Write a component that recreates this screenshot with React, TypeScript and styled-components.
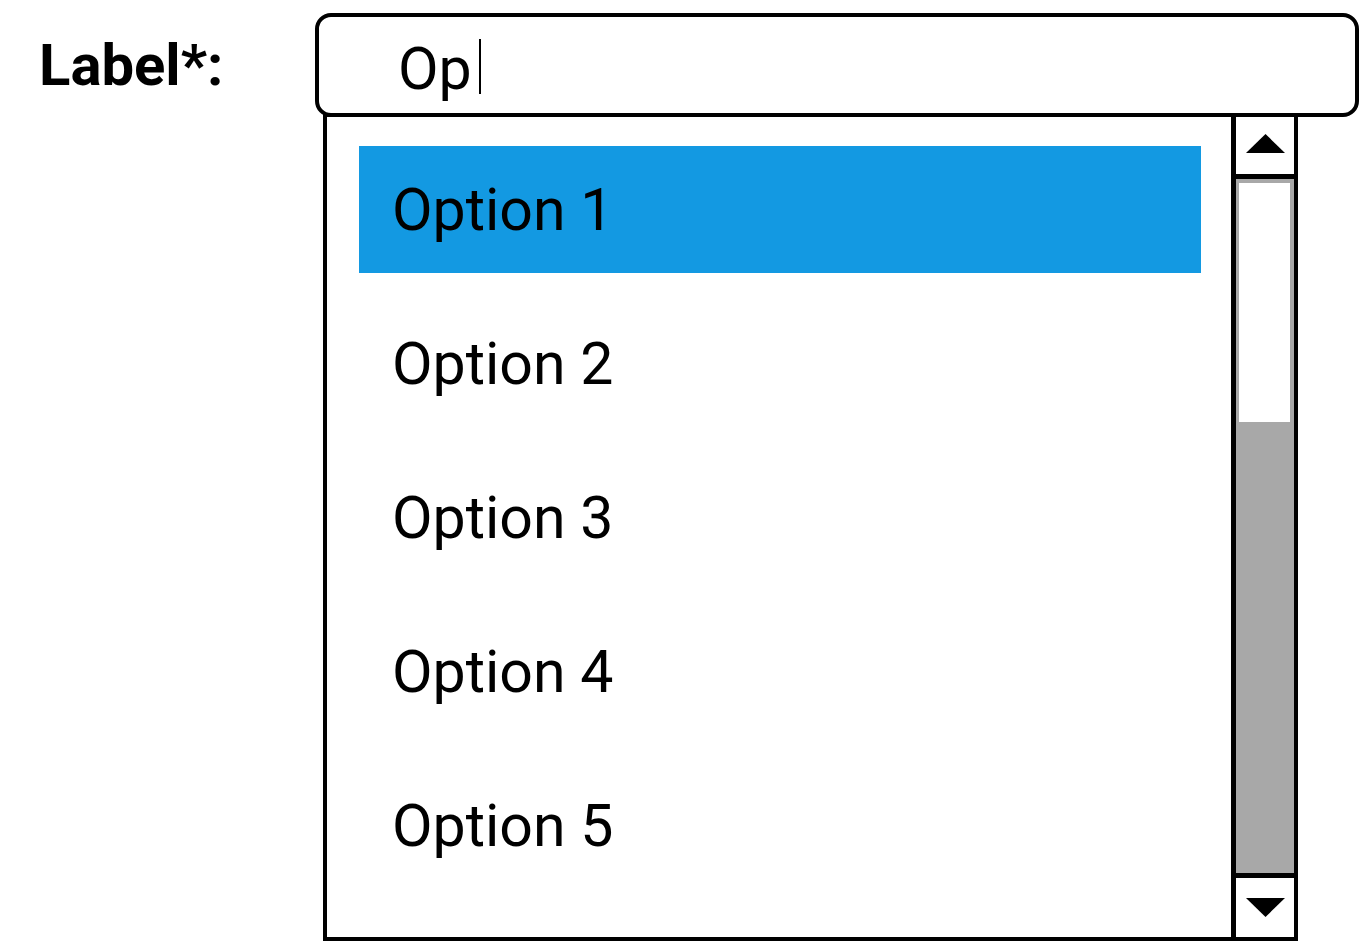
import React from "react";
import styled, { createGlobalStyle } from "styled-components";

const GlobalStyle = createGlobalStyle`
  html, body {
    margin: 0;
    padding: 0;
    background: #ffffff;
    overflow: hidden;
  }
  body {
    font-family: Roboto, "Liberation Sans", Arial, sans-serif;
    color: #000;
  }
  *, *::before, *::after {
    box-sizing: border-box;
  }
`;

const Page = styled.div`
  display: flex;
  align-items: flex-start;
  padding: 13px 0 0 39px;
  width: 1361px;
  height: 942px;
`;

const Label = styled.label`
  width: 276px;
  height: 104px;
  display: flex;
  align-items: center;
  font-size: 58px;
  line-height: 1;
  font-weight: 700;
`;

const Field = styled.div`
  width: 1044px;
  display: flex;
  flex-direction: column;
`;

const InputBox = styled.div`
  position: relative;
  z-index: 1;
  height: 104px;
  border: 4px solid #000;
  border-radius: 16px;
  background: #fff;
  display: flex;
  align-items: center;
  padding: 6px 0 0 79px;
  font-size: 59px;
  line-height: 1;
`;

const Caret = styled.span`
  display: inline-block;
  width: 2px;
  height: 55px;
  background: #000;
  margin-left: 7px;
  margin-top: -4px;
`;

const Listbox = styled.div`
  width: 975px;
  height: 828px;
  margin: -4px 0 0 8px;
  border: 4px solid #000;
  display: flex;
  background: #fff;
`;

const Options = styled.ul`
  flex: 1;
  list-style: none;
  margin: 0;
  padding: 29px 30px 0 32px;
  display: flex;
  flex-direction: column;
  gap: 27px;
  overflow: hidden;
`;

const Option = styled.li<{ $active?: boolean }>`
  flex: none;
  height: 127px;
  display: flex;
  align-items: center;
  padding-left: 33px;
  font-size: 59px;
  line-height: 1;
  background: ${(p) => (p.$active ? "#1399e2" : "transparent")};
`;

const Scrollbar = styled.div`
  width: 63px;
  border-left: 5px solid #000;
  display: flex;
  flex-direction: column;
`;

const ArrowButton = styled.div<{ $down?: boolean }>`
  flex: none;
  height: ${(p) => (p.$down ? "64px" : "62px")};
  border-top: ${(p) => (p.$down ? "5px solid #000" : "none")};
  border-bottom: ${(p) => (p.$down ? "none" : "5px solid #000")};
  display: flex;
  align-items: center;
  justify-content: center;
  padding-bottom: ${(p) => (p.$down ? "0" : "4px")};
  background: #fff;
`;

const Track = styled.div`
  flex: 1;
  background: #a8a8a8;
  padding: 4px 4px 0 3px;
`;

const Thumb = styled.div`
  height: 239px;
  background: #fff;
`;

const Triangle = ({ down }: { down?: boolean }) => (
  <svg width="39" height="19" viewBox="0 0 39 19">
    <polygon points={down ? "0,0 39,0 19.5,19" : "19.5,0 39,19 0,19"} fill="#000" />
  </svg>
);

const options = ["Option 1", "Option 2", "Option 3", "Option 4", "Option 5"];

export default function App() {
  return (
    <>
      <GlobalStyle />
      <Page>
        <Label>Label*:</Label>
        <Field>
          <InputBox>
            Op
            <Caret />
          </InputBox>
          <Listbox>
            <Options>
              {options.map((o, i) => (
                <Option key={o} $active={i === 0}>
                  {o}
                </Option>
              ))}
            </Options>
            <Scrollbar>
              <ArrowButton>
                <Triangle />
              </ArrowButton>
              <Track>
                <Thumb />
              </Track>
              <ArrowButton $down>
                <Triangle down />
              </ArrowButton>
            </Scrollbar>
          </Listbox>
        </Field>
      </Page>
    </>
  );
}
